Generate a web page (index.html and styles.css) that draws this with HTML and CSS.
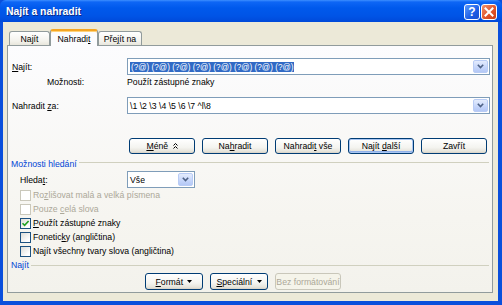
FILE: index.html
```html
<!DOCTYPE html>
<html lang="cs">
<head>
<meta charset="utf-8">
<title>Najít a nahradit</title>
<link rel="stylesheet" href="styles.css">
</head>
<body>
<div class="window">
  <div class="titlebar">
    <span class="title">Najít a nahradit</span>
    <div class="tbtns">
      <span class="tbtn help">?</span>
      <span class="tbtn close"><svg width="10" height="10" viewBox="0 0 10 10"><path d="M1.5 1.5 L8.5 8.5 M8.5 1.5 L1.5 8.5" stroke="#fff" stroke-width="2" stroke-linecap="square"/></svg></span>
    </div>
  </div>
  <div class="frame">
    <div class="tabs">
      <div class="tab t1"><span>Na<u>j</u>ít</span></div>
      <div class="tab t2 active"><span>Nahradi<u>t</u></span></div>
      <div class="tab t3"><span>Pře<u>j</u>ít na</span></div>
    </div>
    <div class="panel">
      <div class="row find">
        <label class="lbl"><u>N</u>ajít:</label>
        <div class="combo wide"><span class="ctext"><span class="sel">(?@) (?@) (?@) (?@) (?@) (?@) (?@) (?@)</span></span><span class="dd"><svg width="7" height="5" viewBox="0 0 7 5"><path d="M0.8 0.8 L3.5 3.5 L6.2 0.8" fill="none" stroke="#4D6185" stroke-width="1.6"/></svg></span></div>
      </div>
      <div class="row opts">
        <span class="lbl sub">Možnosti:</span>
        <span class="val">Použít zástupné znaky</span>
      </div>
      <div class="row replace">
        <label class="lbl">Nahradit <u>z</u>a:</label>
        <div class="combo wide"><span class="ctext">\1 \2 \3 \4 \5 \6 \7 ^l\8</span><span class="dd"><svg width="7" height="5" viewBox="0 0 7 5"><path d="M0.8 0.8 L3.5 3.5 L6.2 0.8" fill="none" stroke="#4D6185" stroke-width="1.6"/></svg></span></div>
      </div>
      <div class="btnrow top">
        <button class="btn"><span class="bl"><u>M</u>éně <svg class="chev" width="5" height="6" viewBox="0 0 5 6"><path d="M0.5 2.5 L2.5 0.5 L4.5 2.5 M0.5 5.5 L2.5 3.5 L4.5 5.5" fill="none" stroke="#000" stroke-width="1"/></svg></span></button>
        <button class="btn"><span class="bl">Na<u>h</u>radit</span></button>
        <button class="btn"><span class="bl">Nahradi<u>t</u> vše</span></button>
        <button class="btn default"><span class="bl">Najít <u>d</u>alší</span></button>
        <button class="btn"><span class="bl">Zavřít</span></button>
      </div>
      <div class="group g1"><span class="gtitle">Možnosti hledání</span><span class="gline"></span></div>
      <div class="row hledat">
        <label class="lbl"><span class="ind">Hleda<u>t</u>:</span></label>
        <div class="combo small"><span class="ctext">Vše</span><span class="dd"><svg width="7" height="5" viewBox="0 0 7 5"><path d="M0.8 0.8 L3.5 3.5 L6.2 0.8" fill="none" stroke="#4D6185" stroke-width="1.6"/></svg></span></div>
      </div>
      <div class="checks">
        <div class="chk disabled"><span class="box"></span><span>Ro<u>z</u>lišovat malá a velká písmena</span></div>
        <div class="chk disabled"><span class="box"></span><span>Pouze <u>c</u>elá slova</span></div>
        <div class="chk"><span class="box"><svg width="9" height="9" viewBox="0 0 9 9"><path d="M1.5 4.2 L3.6 6.4 L7.6 2" fill="none" stroke="#21A121" stroke-width="1.6"/></svg></span><span><u>P</u>oužít zástupné znaky</span></div>
        <div class="chk"><span class="box"></span><span>Fonetic<u>k</u>y (angličtina)</span></div>
        <div class="chk"><span class="box"></span><span>Na<u>j</u>ít všechny tvary slova (angličtina)</span></div>
      </div>
      <div class="group g2"><span class="gtitle">Najít</span><span class="gline"></span></div>
      <div class="btnrow bottom">
        <button class="btn narrow"><span class="bl"><u>F</u>ormát <svg class="tri" width="5" height="3" viewBox="0 0 5 3"><path d="M0 0 L5 0 L2.5 3 Z" fill="#000"/></svg></span></button>
        <button class="btn narrow"><span class="bl"><u>S</u>peciální <svg class="tri" width="5" height="3" viewBox="0 0 5 3"><path d="M0 0 L5 0 L2.5 3 Z" fill="#000"/></svg></span></button>
        <button class="btn dis"><span class="bl">Bez formátování</span></button>
      </div>
    </div>
  </div>
</div>
</body>
</html>
```
FILE: styles.css
```css
* { box-sizing: border-box; }
html, body { margin: 0; padding: 0; }
body {
  width: 502px;
  height: 305px;
  overflow: hidden;
  font-family: "Liberation Sans", Arial, sans-serif;
  font-size: 8.7px;
  color: #000;
  background: #fff;
}
u { text-decoration: underline; text-underline-offset: 1px; }

.window {
  width: 502px;
  height: 305px;
  display: flex;
  flex-direction: column;
  background: #0A4FDC;
}
.titlebar {
  height: 22px;
  flex: none;
  display: flex;
  align-items: center;
  justify-content: space-between;
  padding: 0 5px 0 6px;
  background: linear-gradient(#3D8FFF 0, #0E66F5 2px, #0059EC 8px, #0054E6 16px, #0049D9 22px);
  border-radius: 6px 6px 0 0;
}
.title {
  color: #fff;
  font-weight: bold;
  font-size: 10.4px;
  text-shadow: 1px 1px 0 #0A2A8A;
  margin-top: 1px;
}
.tbtns { display: flex; gap: 1px; margin-top: 1px; }
.tbtn {
  width: 16px;
  height: 16px;
  border: 1px solid #fff;
  border-radius: 3px;
  display: flex;
  align-items: center;
  justify-content: center;
  color: #fff;
  font-weight: bold;
  font-size: 12px;
}
.help { background: linear-gradient(135deg, #5D9BFF, #1D5EE5 60%, #1A4FD0); }
.close { background: linear-gradient(135deg, #F0926E, #E2552B 55%, #C83E16); }

.frame {
  flex: 1;
  margin: 0 4px 4px 3px;
  background: #ECE9D8;
  padding: 7px 5px 8px 4px;
  display: flex;
  flex-direction: column;
}
.tabs {
  height: 16px;
  flex: none;
  display: flex;
  align-items: flex-end;
  padding-left: 2px;
  position: relative;
  z-index: 1;
}
.tab {
  height: 14px;
  border: 1px solid #919B9C;
  border-bottom: none;
  border-radius: 3px 3px 0 0;
  background: linear-gradient(#FFFFFF, #F3F2EC 70%, #E8E6DC);
  display: flex;
  align-items: center;
  justify-content: center;
  padding-top: 1px;
  white-space: nowrap;
}
.t1 { width: 41px; }
.t2 { width: 48px; }
.t3 { width: 44px; }
.tab.active {
  height: 17px;
  margin-bottom: -1px;
  background: #FCFCFE;
  border-top: 2px solid #F5A623;
  box-shadow: inset 0 1px 0 #FFD27A;
  padding-top: 0;
}

.panel {
  flex: 1;
  border: 1px solid #919B9C;
  background: linear-gradient(#FCFCFE, #F6F5F0 70%, #F3F2EC);
  padding: 0 2px 0 0;
  display: flex;
  flex-direction: column;
}
.row { display: flex; align-items: center; flex: none; }
.lbl { width: 119px; padding-left: 4px; flex: none; }
.lbl.sub { padding-left: 39px; }
.ind { padding-left: 8px; }
.find { margin-top: 12px; height: 17px; }
.opts { height: 13px; }
.replace { margin-top: 9px; height: 17px; }
.hledat { margin-top: 1px; height: 17px; }

.combo {
  height: 17px;
  border: 1px solid #7F9DB9;
  background: #fff;
  display: flex;
  align-items: center;
  justify-content: space-between;
  padding: 1px;
}
.combo.wide { flex: 1; }
.combo.small { width: 68px; }
.ctext { padding-left: 1px; white-space: nowrap; overflow: hidden; }
.sel { background: #316AC5; color: #fff; padding: 1px 1px; font-size: 8.2px; }
.dd {
  width: 15px;
  height: 13px;
  flex: none;
  border: 1px solid #B9CCF5;
  border-radius: 2px;
  background: linear-gradient(#E4ECFD, #C5D5FA 60%, #B4C8F6);
  display: flex;
  align-items: center;
  justify-content: center;
}

.btnrow { display: flex; gap: 7px; flex: none; }
.btnrow.top { margin-top: 24px; height: 16px; padding-left: 121px; }
.btnrow.bottom { margin-top: 2px; height: 17px; padding-left: 137px; }
.btn {
  width: 66px;
  height: 100%;
  border: 1px solid #003C74;
  border-radius: 3px;
  background: linear-gradient(#FFFFFF, #F4F4F0 60%, #E6E4DB 88%, #D6D0C5);
  font-family: inherit;
  font-size: 8.7px;
  color: #000;
  padding: 0;
  text-align: center;
  white-space: nowrap;
}
.bl { display: inline-block; white-space: nowrap; }
.btn svg { vertical-align: middle; margin-left: 2px; }
.chev { position: relative; top: -1px; }
.tri { position: relative; top: -1px; }
.btn.narrow { width: 58px; }
.btn.default { box-shadow: inset 0 0 0 1px #A9C6F2, inset 0 -1px 0 1px #8FB0EA; }
.btn.dis {
  border-color: #C9C7BA;
  background: #F5F4EA;
  color: #ACA899;
}

.group { display: flex; align-items: center; height: 12px; flex: none; }
.g1 { margin-top: 4px; }
.g2 { margin-top: 1px; }
.gtitle { color: #0046D5; padding-left: 3px; padding-right: 2px; }
.gline { flex: 1; height: 1px; background: #D0D0BF; margin-right: 1px; }
.g1 .gline { margin-top: -3px; }

.checks { display: flex; flex-direction: column; flex: none; }
.chk { height: 14px; display: flex; align-items: center; padding-left: 12px; gap: 2px; }
.box {
  width: 11px;
  height: 11px;
  border: 1px solid #1C5180;
  background: linear-gradient(135deg, #DCDCD7, #FFFFFF 80%);
  display: flex;
  align-items: center;
  justify-content: center;
}
.chk.disabled { color: #ACA899; }
.chk.disabled .box { border-color: #CAC8BB; background: #fff; }
```
